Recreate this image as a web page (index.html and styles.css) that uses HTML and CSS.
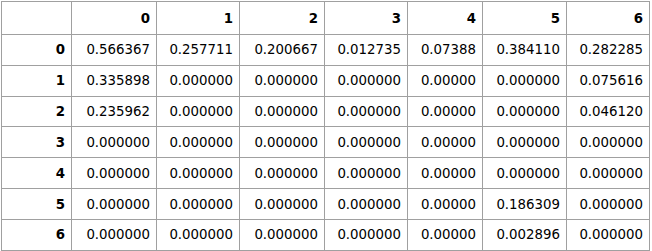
FILE: index.html
```html
<!DOCTYPE html>
<html>
<head>
<meta charset="utf-8">
<link rel="stylesheet" href="styles.css">
</head>
<body>
<table class="df">
  <colgroup>
    <col class="c-idx"><col class="c-a"><col class="c-b"><col class="c-a"><col class="c-b"><col class="c-n"><col class="c-c"><col class="c-b">
  </colgroup>
  <thead>
    <tr class="head"><th></th><th>0</th><th>1</th><th>2</th><th>3</th><th>4</th><th>5</th><th>6</th></tr>
  </thead>
  <tbody>
    <tr><th>0</th><td>0.566367</td><td>0.257711</td><td>0.200667</td><td>0.012735</td><td>0.07388</td><td>0.384110</td><td>0.282285</td></tr>
    <tr><th>1</th><td>0.335898</td><td>0.000000</td><td>0.000000</td><td>0.000000</td><td>0.00000</td><td>0.000000</td><td>0.075616</td></tr>
    <tr><th>2</th><td>0.235962</td><td>0.000000</td><td>0.000000</td><td>0.000000</td><td>0.00000</td><td>0.000000</td><td>0.046120</td></tr>
    <tr><th>3</th><td>0.000000</td><td>0.000000</td><td>0.000000</td><td>0.000000</td><td>0.00000</td><td>0.000000</td><td>0.000000</td></tr>
    <tr><th>4</th><td>0.000000</td><td>0.000000</td><td>0.000000</td><td>0.000000</td><td>0.00000</td><td>0.000000</td><td>0.000000</td></tr>
    <tr><th>5</th><td>0.000000</td><td>0.000000</td><td>0.000000</td><td>0.000000</td><td>0.00000</td><td>0.186309</td><td>0.000000</td></tr>
    <tr><th>6</th><td>0.000000</td><td>0.000000</td><td>0.000000</td><td>0.000000</td><td>0.00000</td><td>0.002896</td><td>0.000000</td></tr>
  </tbody>
</table>
</body>
</html>
```
FILE: styles.css
```css
html, body {
  background: #ffffff;
}
body {
  margin: 1px;
  font-family: "DejaVu Sans", Verdana, sans-serif;
  font-size: 13.33px;
  color: #000000;
}
.df {
  border-collapse: collapse;
  table-layout: fixed;
  width: 649px;
}
.c-idx { width: 70px; }
.c-a { width: 85px; }
.c-b { width: 83px; }
.c-c { width: 84px; }
.c-n { width: 75px; }
.df th, .df td {
  border: 1px solid #a0a0a0;
  padding: 0 6px 0 0;
  text-align: right;
  vertical-align: middle;
  white-space: nowrap;
  height: 30px;
}
.df th {
  font-weight: bold;
}
.df .head th {
  height: 32px;
}
.df tbody tr:nth-child(odd) td,
.df tbody tr:nth-child(odd) th {
  height: 29.7px;
}
```
